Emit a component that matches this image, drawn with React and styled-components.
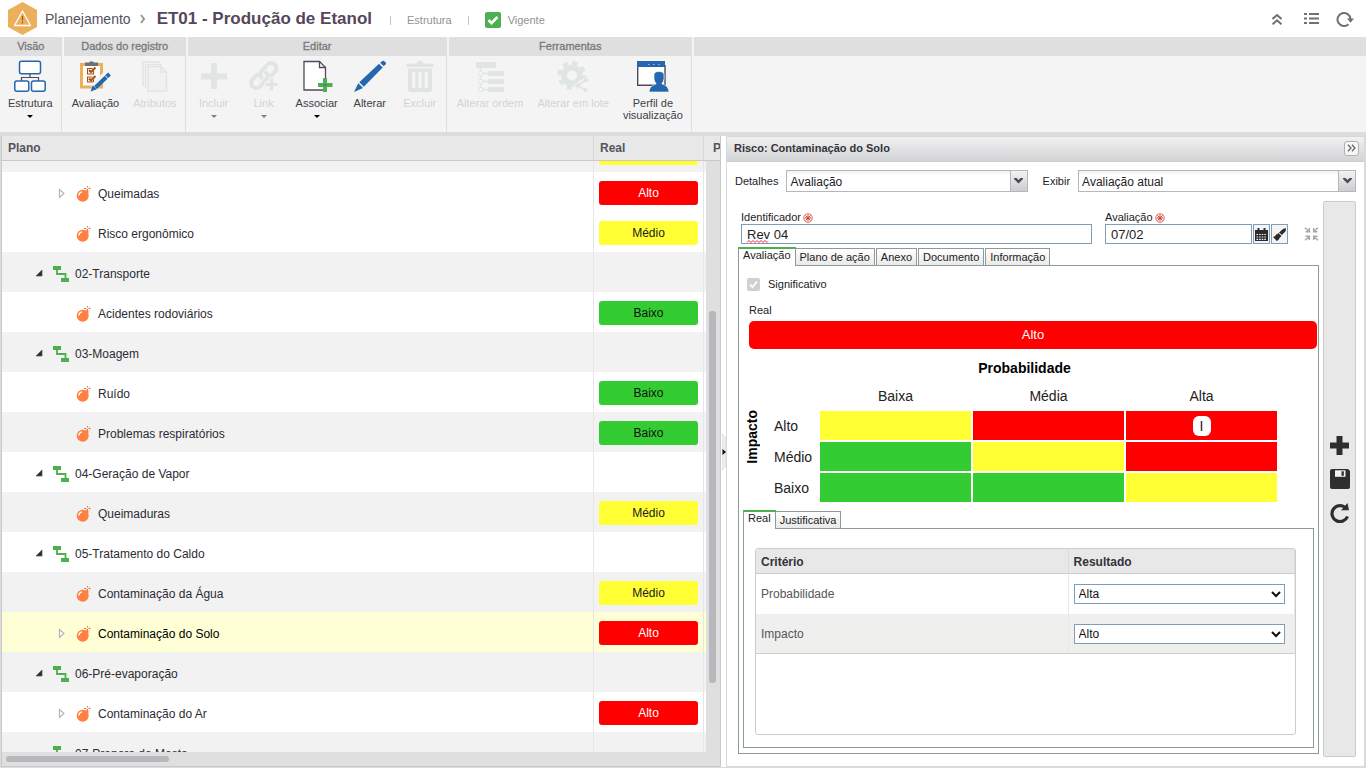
import React, { useEffect, useRef } from 'react';
import styled, { createGlobalStyle, css } from 'styled-components';

const sans = '"Liberation Sans", Arial, sans-serif';

const LEVELS = {
  Alto: { background: '#ff0000', color: '#ffffff' },
  Médio: { background: '#ffff33', color: '#222222' },
  Baixo: { background: '#33cc33', color: '#111111' },
};

const GlobalStyle = createGlobalStyle`
  *, *::before, *::after {
    box-sizing: border-box;
  }
  html, body, #root {
    height: 100%;
    margin: 0;
  }
  body {
    overflow: hidden;
    font-family: ${sans};
    font-size: 12px;
    color: #222;
    background: #dcdcdc;
  }
  button, input, select {
    font-family: inherit;
    margin: 0;
  }
  svg {
    display: block;
    flex: none;
  }
`;

const Page = styled.div`
  display: flex;
  flex-direction: column;
  height: 100%;
`;

/* top bar */

const TopBar = styled.header`
  display: flex;
  align-items: center;
  flex: none;
  height: 37px;
  padding: 0 12px 0 8px;
  background: #fff;
  color: #8c9494;
  font-size: 11px;
`;
const Crumb = styled.a`
  margin: 0 9px 0 8px;
  color: #54505c;
  font-size: 14px;
  text-decoration: none;
`;
const PageTitle = styled.h1`
  margin: 0 18px 0 11px;
  color: #54475c;
  font-size: 17px;
  line-height: 20px;
`;
const Bar = styled.span`
  width: 1px;
  height: 9px;
  margin-top: 4px;
  background: #c4c4c4;
`;
const TopText = styled.span`
  margin: 3px 16px 0;
`;
const Status = styled.span`
  display: flex;
  align-items: center;
  gap: 7px;
  margin: 3px 0 0 16px;
`;
const TopActions = styled.div`
  display: grid;
  grid-template-columns: repeat(3, 18px);
  align-items: center;
  gap: 16px;
  margin-left: auto;
`;
const IconButton = styled.button`
  display: flex;
  align-items: center;
  justify-content: center;
  padding: 0;
  border: 0;
  background: none;
`;

/* ribbon */

const Ribbon = styled.nav`
  display: flex;
  gap: 2px;
  flex: none;
  height: 95px;
  background: #f4f4f4;
`;
const Group = styled.section`
  display: flex;
  flex-direction: column;
  flex: ${({ $grow }) => ($grow ? '1' : 'none')};
`;
const GroupTitle = styled.h2`
  height: 19px;
  margin: 0;
  background: #dfdfdf;
  color: #77797c;
  font-size: 11px;
  font-weight: 400;
  line-height: 18px;
  text-align: center;
  -webkit-text-stroke: 0.3px #77797c;
`;
const GroupBody = styled.div`
  display: flex;
  flex: 1;
  padding: 4px 1px 0;
  border-right: ${({ $last }) => ($last ? '0' : '1px solid #dedede')};
`;
const Tool = styled.button`
  display: flex;
  flex-direction: column;
  align-items: center;
  min-width: 50px;
  padding: 0 7px;
  border: 0;
  background: none;
  color: ${({ disabled }) => (disabled ? '#d2d4d6' : '#3e4046')};
  font-size: 11px;
  line-height: 12px;
`;
const ToolLabel = styled.span`
  margin-top: 5px;
  text-align: center;
  white-space: pre-line;
`;
const Caret = styled.span`
  margin-top: 6px;
  border: 3px solid transparent;
  border-top-color: ${({ $dim }) => ($dim ? '#808080' : '#000')};
  border-bottom: 0;
`;

/* workspace */

const Workspace = styled.main`
  display: grid;
  grid-template-columns: minmax(0, 720fr) 5px minmax(0, 639fr);
  flex: 1;
  min-height: 0;
  padding: 4px 1px 1px;
`;
const TreePanel = styled.section`
  display: flex;
  flex-direction: column;
  min-height: 0;
  overflow: hidden;
  border: 1px solid #c9c9c9;
  border-top: 0;
  background: #dfdfdf;
`;
const Clip = styled.div`
  overflow: hidden;
  flex: none;
  border-bottom: 1px solid #c9c9c9;
`;
const TreeTable = styled.table`
  width: calc(100% + ${({ $overflow }) => $overflow}px);
  border-collapse: separate;
  border-spacing: 0;
  table-layout: fixed;
`;
const TreeHead = styled.th`
  height: 24px;
  padding: 0 6px;
  border-right: 1px solid #d8d8d8;
  background: #e8e8e8;
  color: #54545c;
  font-size: 12px;
  text-align: left;

  &:last-child {
    padding-left: 9px;
  }
`;
const TreeBody = styled.div`
  display: flex;
  flex: 1;
  min-height: 0;
`;
const Viewport = styled.div`
  flex: 1;
  min-width: 0;
  overflow: hidden;
`;
const TreeRow = styled.tr`
  height: 40px;
  background: ${({ $tone }) => ({ alt: '#f2f2f2', active: '#feffd5' }[$tone] || '#fff')};
  color: ${({ $tone }) => ($tone === 'active' ? '#000' : '#2b2b33')};
`;
const TreeCell = styled.td`
  padding: 2px 5px 0;
  border-right: 1px solid #e6e6e6;
  vertical-align: middle;
`;
const NodeLine = styled.div`
  display: grid;
  grid-template-columns: 13px 16px 1fr;
  align-items: center;
  gap: 6px;
  padding: 2px 0 0 ${({ $depth }) => 27 + $depth * 23}px;
  white-space: nowrap;
`;
const Pill = styled.div`
  height: 24px;
  border-radius: 3px;
  background: ${({ $level }) => LEVELS[$level].background};
  color: ${({ $level }) => LEVELS[$level].color};
  line-height: 24px;
  text-align: center;
`;
const VerticalTrack = styled.div`
  display: grid;
  grid-template-rows: 150fr 372fr 69fr;
  flex: none;
  width: 14px;
  padding: 0 4px 0 3px;
`;
const HorizontalTrack = styled.div`
  display: grid;
  grid-template-columns: 23fr 77fr;
  flex: none;
  height: 14px;
  padding: 4px;
`;
const Thumb = styled.div`
  ${({ $vertical }) => $vertical && 'grid-row: 2;'}
  height: ${({ $vertical }) => ($vertical ? 'auto' : '6px')};
  border-radius: 3px;
  background: #b8b8bc;
`;
const Splitter = styled.div`
  display: flex;
  align-items: center;
  justify-content: flex-end;
  background: #fff;
`;

/* detail panel */

const Detail = styled.section`
  display: flex;
  flex-direction: column;
  min-height: 0;
  border: 1px solid #d8d8d8;
  background: #fff;
`;
const DetailHead = styled.div`
  display: flex;
  align-items: center;
  justify-content: space-between;
  flex: none;
  height: 25px;
  padding: 0 5px 2px 7px;
  border-bottom: 1px solid #ccc;
  background: linear-gradient(#f1f1f1, #d3d4d6);
`;
const DetailTitle = styled.h2`
  margin: 0;
  color: #33333b;
  font-size: 11px;
`;
const Collapse = styled(IconButton)`
  width: 15px;
  height: 15px;
  border: 1px solid #b0b0b0;
  border-radius: 3px;
  background: #f6f6f6;
`;
const Filters = styled.div`
  display: flex;
  align-items: center;
  flex: none;
  padding: 8px 8px 0;
  font-size: 11px;
`;
const FilterLabel = styled.label`
  margin-right: 8px;
`;
const SelectShell = styled.div`
  display: flex;
  position: relative;
  flex: ${({ $grow }) => $grow} 1 0;
  height: 22px;
  margin-right: ${({ $gap }) => $gap || 0}px;
  border: 1px solid #b5b8bb;
`;
const FlatSelect = styled.select`
  appearance: none;
  width: 100%;
  padding: 1px 18px 0 3px;
  border: 0;
  background: linear-gradient(#f0f0f0, #fff 4px);
  color: #222;
  font-size: 12px;
`;
const SelectArrow = styled.span`
  display: flex;
  position: absolute;
  top: 0;
  right: 0;
  bottom: 0;
  align-items: center;
  justify-content: center;
  width: 17px;
  border-left: 1px solid #b5b8bb;
  background: linear-gradient(#f4f4f4, #ccc);
  pointer-events: none;
`;
const DetailBody = styled.div`
  display: flex;
  flex: 1;
  gap: 4px;
  min-height: 0;
  padding: 9px 8px 9px 11px;
`;
const Form = styled.form`
  display: flex;
  flex-direction: column;
  flex: 1;
  min-width: 0;
  padding-bottom: 3px;
`;
const SideBar = styled.aside`
  display: flex;
  flex-direction: column;
  align-items: center;
  justify-content: center;
  gap: 14px;
  flex: none;
  width: 33px;
  border: 1px solid #ccc;
  border-radius: 2px;
  background: #e8e8e8;
`;
const Fields = styled.div`
  display: flex;
  align-items: flex-end;
  flex: none;
  height: 43px;
  padding-left: 3px;
`;
const Field = styled.div`
  display: flex;
  flex-direction: column;
  position: relative;
  flex: ${({ $fixed }) => ($fixed ? `0 0 ${$fixed}px` : '1')};
  min-width: 0;
  margin-right: ${({ $gap }) => $gap || 0}px;
`;
const FieldLabel = styled.label`
  display: flex;
  align-items: center;
  gap: 2px;
  font-size: 11px;
  line-height: 13px;
`;
const FieldLine = styled.div`
  display: flex;
  gap: 1px;
`;
const TextInput = styled.input`
  flex: 1;
  min-width: 0;
  height: 20px;
  padding: 0 5px;
  border: 1px solid #7f9db9;
  border-radius: 0;
  background: #fff;
  color: #222;
  font-size: 13px;
`;
const Squiggle = styled.svg`
  position: absolute;
  left: 6px;
  bottom: 1px;
`;
const FieldButton = styled(IconButton)`
  width: 17px;
  height: 20px;
  border: 1px solid #7f9db9;
  background: #f4f4f4;
`;
const Shrink = styled(IconButton)`
  height: 20px;
  margin-left: 16px;
`;

const Tabs = styled.div`
  display: flex;
  align-items: flex-start;
  gap: 1px;
  flex: none;
  height: 18px;
  margin-top: ${({ $gap }) => $gap}px;
`;
const Tab = styled.button`
  flex: none;
  height: 18px;
  margin-top: 1px;
  padding: 0 4px;
  border: 1px solid #8e9c98;
  background: linear-gradient(#fff, #e9e9e9);
  color: #222;
  font-size: 11px;
  line-height: 15px;
  ${({ $active }) => $active && css`
    position: relative;
    z-index: 1;
    height: 19px;
    margin: 0 -2px 0 0;
    padding-bottom: 5px;
    border-top: 2px solid #4caf50;
    border-bottom: 0;
    background: #fff;
    line-height: 11px;
  `}
`;
const TabPanel = styled.div`
  display: flex;
  flex-direction: column;
  flex: 1;
  min-height: 0;
  margin-right: ${({ $inset }) => $inset || 0}px;
  border: 1px solid #8e9c98;
  padding: ${({ $pad }) => $pad};
`;
const CheckLine = styled.div`
  display: flex;
  align-items: center;
  gap: 8px;
  height: 14px;
  padding-left: 4px;
  font-size: 11px;
`;
const Check = styled.input`
  appearance: none;
  width: 13px;
  height: 13px;
  border-radius: 2px;
  background: #d0d0d0;
`;
const CheckMark = styled.span`
  display: grid;
  position: relative;
`;
const CheckGlyph = styled.svg`
  position: absolute;
  top: 2px;
  left: 2px;
  pointer-events: none;
`;
const Caption = styled.div`
  margin: 12px 6px 4px;
  font-size: 11px;
  line-height: 14px;
`;
const Result = styled.div`
  flex: none;
  height: 28px;
  margin: 0 1px 0 6px;
  border-radius: 5px;
  background: #ff0000;
  color: #fff;
  font-size: 13px;
  line-height: 28px;
  text-align: center;
`;
const AxisTitle = styled.h3`
  margin: 0;
  font-size: 14px;
  line-height: 16px;
  text-align: center;
  color: #000;
  ${({ $vertical }) => $vertical && css`
    writing-mode: vertical-rl;
    rotate: 180deg;
    line-height: 18px;
  `}
`;
const MatrixBlock = styled.div`
  display: grid;
  grid-template-columns: 18px 1fr;
  align-items: end;
  margin: 11px 39px 0 0;
`;
const AxisTop = styled(AxisTitle)`
  grid-column: 1 / -1;
  margin: 0 -22px 9px 5px;
`;
const AxisSlot = styled.div`
  display: flex;
  align-items: center;
  height: 59px;
  margin-bottom: 38px;
`;
const Matrix = styled.table`
  width: 100%;
  padding: 0 0 0 11px;
  border-spacing: 2px;
  border-collapse: separate;
  table-layout: fixed;
  font-size: 14px;
`;
const MatrixHead = styled.th`
  height: 22px;
  padding: 0 0 4px;
  font-weight: 400;
`;
const MatrixRowHead = styled.th`
  width: 44px;
  padding: 0;
  font-weight: 400;
  text-align: left;
`;
const MatrixCell = styled.td`
  height: 29px;
  padding: 0;
  background: ${({ $level }) => LEVELS[$level].background};
`;
const Marker = styled.span`
  display: block;
  width: 18px;
  height: 20px;
  margin: 0 auto;
  border-radius: 6px;
  background: #fff;
  color: #222;
  line-height: 20px;
  text-align: center;
`;

const CriteriaBox = styled.div`
  flex: 1;
  border: 1px solid #ccc;
  border-radius: 3px;
  overflow: hidden;
`;
const Criteria = styled.table`
  width: 100%;
  border-spacing: 0;
  border-collapse: separate;
  table-layout: fixed;
  color: #55555c;
`;
const CriteriaHead = styled.th`
  width: ${({ $width }) => $width || 'auto'};
  height: 25px;
  padding: 2px 5px 0;
  border-right: 1px solid #dcdcdc;
  border-bottom: 1px solid #ccc;
  background: #e8e8e8;
  color: #33333b;
  text-align: left;
`;
const CriteriaCell = styled.td`
  height: 40px;
  padding: 0 9px 0 5px;
  border-right: 1px solid #e8e8e8;
  background: ${({ $alt }) => ($alt ? '#efefed' : '#fff')};
  ${({ $alt }) => $alt && 'border-bottom: 1px solid #ccc;'}
`;
const NativeSelect = styled.select`
  display: block;
  width: 100%;
  height: 20px;
  border: 1px solid #7f9db9;
  border-radius: 0;
  background: #fff;
  color: #111;
  font-size: 12px;
`;

/* icons */

const HexLogo = () => (
  <svg width="29" height="33" viewBox="0 0 29 33">
    <path d="M14.500 0 29 8v17l-14.500 8L0 25V8z" fill="#ecb05c" />
    <path d="M14.500 9 22.500 23.500h-16z" fill="none" stroke="#fff" strokeWidth="1.300" strokeLinejoin="round" />
    <path d="M14.500 14v4.500M14.500 19.700v1.500" stroke="#a8500f" strokeWidth="1.200" />
  </svg>
);
const CrumbArrow = () => (
  <svg width="6" height="10" viewBox="0 0 6 10" fill="none" stroke="#8b9e9a" strokeWidth="2">
    <path d="M1 1l3 4-3 4" />
  </svg>
);
const GreenCheck = () => (
  <svg width="16" height="16" viewBox="0 0 16 16">
    <rect width="16" height="16" rx="2" fill="#4caf50" />
    <path d="M3.500 8l3 3.200 6-6.200" fill="none" stroke="#fff" strokeWidth="2.600" />
  </svg>
);
const DoubleUp = () => (
  <svg width="10" height="12" viewBox="0 0 10 12" fill="none" stroke="#6f6f77" strokeWidth="2">
    <path d="M.5 6 5 2l4.500 4M.5 11.300 5 7.300l4.500 4" />
  </svg>
);
const ListIcon = () => (
  <svg width="15" height="11" viewBox="0 0 15 11" fill="#6f6f77">
    <path d="M0 0h3v2H0zM5 0h10v2H5zM0 4.500h3v2H0zM5 4.500h10v2H5zM0 9h3v2H0zM5 9h10v2H5z" />
  </svg>
);
const Reload = () => (
  <svg width="18" height="16" viewBox="0 0 18 16">
    <path d="M12.500 13.200A6.500 6.500 0 1 1 14.500 8" fill="none" stroke="#6f6f77" strokeWidth="2" />
    <path d="M11 7.500h7l-3.500 4.300z" fill="#6f6f77" />
  </svg>
);

const StructureIcon = () => (
  <svg width="32" height="32" viewBox="0 0 32 32" fill="#fff" stroke="#2567ae" strokeWidth="1.500">
    <path d="M16 13v4M7.500 21v-3.500h17V21" fill="none" stroke="#54475c" strokeWidth="1.200" />
    <rect x="5.500" y="1.200" width="21" height="12.500" rx="2" />
    <rect x=".8" y="21" width="14" height="10.200" rx="2" />
    <rect x="17.500" y="21" width="13.700" height="10.200" rx="2" />
  </svg>
);
const ClipboardIcon = () => (
  <svg width="32" height="32" viewBox="0 0 32 32">
    <rect x="2.500" y="4.500" width="20" height="22.500" fill="#fff" stroke="#ecb05c" strokeWidth="3" />
    <path d="M6 2.500h4a3 3 0 0 1 5 0h4v3.500H6z" fill="#6f6f77" />
    <g fill="none" stroke="#a8500f" strokeWidth="1.100">
      <path d="M14.500 11v3H8.500V8.500h5M14.500 19.500v2.500H8.500v-5h5" />
      <path d="M10 10l2 2 4.500-4.500M10 18.500l2 2 4.500-4.500" strokeWidth="2" />
    </g>
    <path d="M26 15l-12.500 12.500" stroke="#f4f4f4" strokeWidth="6" />
    <path d="M30.500 14l-14 13.500" stroke="#2567ae" strokeWidth="4" />
    <path d="M11.500 31.500l2.300-6.200 4 4z" fill="#2567ae" />
    <path d="M26 15.500l3.500 3.500" stroke="#fff" />
  </svg>
);
const PagesIcon = () => (
  <svg width="32" height="32" viewBox="0 0 32 32" fill="#f1f1f1" stroke="#e2e4e5" strokeWidth="1.500">
    <path d="M4 26V2h17M6.500 28V4.500H23" fill="none" />
    <path d="M9 6.500h13l5.500 5.500v19H9z" />
    <path d="M22 6.500V12h5.500" fill="none" />
  </svg>
);
const PlusIcon = () => (
  <svg width="32" height="32" viewBox="0 0 32 32" fill="#e1e4e5">
    <path d="M13 3h6v10.500h10v6H19V29h-6v-9.500H3v-6h10z" />
  </svg>
);
const LinkIcon = () => (
  <svg width="32" height="32" viewBox="0 0 32 32">
    <g fill="none" stroke="#e1e4e5" strokeWidth="4" strokeLinecap="round">
      <path d="M13.500 17.500a5 5 0 0 1 0-6.500l6-6.500a5 5 0 0 1 7.300 0 5 5 0 0 1 0 7.300L23 16" />
      <path d="M18 12.500a5 5 0 0 1 0 7l-6 7a5 5 0 0 1-7.300 0 5 5 0 0 1 0-7.300L9 15" />
    </g>
    <path d="M21.500 18h4v4.500H30v4h-4.500V31h-4v-4.500H17v-4h4.500z" fill="#e1e4e5" stroke="#f4f4f4" />
  </svg>
);
const AssociateIcon = () => (
  <svg width="32" height="32" viewBox="0 0 32 32">
    <path d="M3 1.500h15.500l6 6v22.500H3z" fill="#fff" stroke="#54475c" strokeWidth="1.300" />
    <path d="M18.500 1.500v6h6" fill="none" stroke="#54475c" strokeWidth="1.300" />
    <path d="M22 18h4v5h5.500v4H26v5h-4v-5h-5v-4h5z" fill="#4caf50" />
    <path d="M22.500 25h3" stroke="#2567ae" />
  </svg>
);
const PencilIcon = () => (
  <svg width="32" height="32" viewBox="0 0 32 32" fill="#2567ae">
    <path d="M28.500 1q1.500-.8 2.300.7 2 1.300.7 2.800l-1.800 1.800-3.500-3.500zM25 3.700l3.700 3.700L9.800 26.800 5.300 22.300zM4.300 23.300l4.700 4.700L0 32z" />
  </svg>
);
const TrashIcon = () => (
  <svg width="32" height="32" viewBox="0 0 32 32" fill="#e1e4e5">
    <path d="M2.500 3.500h10q1-3 3.500-3t3.500 3h10V7h-27z" />
    <path fillRule="evenodd" d="M4 8.500h24V29q0 3-3 3H7q-3 0-3-3zM8 12v16h3.500V12zm6.300 0v16h3.500V12zm6.300 0v16h3.400V12z" />
  </svg>
);
const OrderIcon = () => (
  <svg width="32" height="32" viewBox="0 0 32 32" fill="#e1e4e5">
    <path d="M2 2h20v6H2zM14 11h16v5H14zM14 19h16v5H14zM14 27h16v5H14z" />
    <path d="M6.500 8v22M6.500 13.500H14M6.500 21.500H14M6.500 29.500H14" stroke="#e1e4e5" strokeWidth="1.500" />
    <path d="M4.700 11.700h3.800v3.600H4.700zM4.700 19.700h3.800v3.600H4.700zM4.700 27.700h3.800v3.600H4.700z" fill="#f8f8f8" stroke="#e1e4e5" />
  </svg>
);
const GearIcon = () => (
  <svg width="32" height="32" viewBox="0 0 32 32">
    <circle cx="15" cy="15.500" r="8" fill="none" stroke="#e1e4e5" strokeWidth="6" />
    <circle cx="15" cy="15.500" r="12" fill="none" stroke="#e1e4e5" strokeWidth="5" strokeDasharray="5 4.425" />
    <path d="M31 19l-9 6 8 5.500" fill="none" stroke="#f4f4f4" strokeWidth="6" />
    <path d="M29 20l-8 5.500 7 4.500" fill="none" stroke="#e1e4e5" strokeWidth="2" />
    <g fill="#e1e4e5">
      <circle cx="29" cy="20" r="2.200" />
      <circle cx="20.500" cy="25.500" r="2.200" />
      <circle cx="28.500" cy="30" r="2" />
    </g>
  </svg>
);
const ProfileIcon = () => (
  <svg width="32" height="32" viewBox="0 0 32 32">
    <path d="M.7 5v20.300H28V5" fill="#fff" stroke="#54475c" strokeWidth="1.400" />
    <path d="M0 1h28v6H0z" fill="#2567ae" />
    <path d="M11 4.500h1.500M16 4.500h1.500M21 4.500h1.500" stroke="#9cbfe4" />
    <path
      d="M17 15q0-3.500 5-3.500t5 3.500v4q-.5 3-2 4v1q6.500 1.500 7 8H12q.5-6.500 7-8v-1q-1.500-1-2-4z"
      fill="#2567ae"
      stroke="#fff"
      strokeWidth=".6"
    />
  </svg>
);

const BombIcon = () => (
  <svg width="16" height="16" viewBox="0 0 16 16">
    <circle cx="6.700" cy="9.700" r="6" fill="#ff8040" />
    <path d="M8.500 5.500l2-2 2.500 2.500-2 2z" fill="#ff8040" />
    <path d="M2.800 9.500Q3 6.500 6 5.900" fill="none" stroke="#fff" strokeWidth="1.300" />
    <path d="M8 2.500h2.500M12.500 2.500h2M11.500 0v1.500M11.500 3v2M13.500.8l-.5.500M13.500 4.500l.5.500" stroke="#e07038" strokeWidth=".9" />
  </svg>
);
const ProcessIcon = () => (
  <svg width="16" height="16" viewBox="0 0 16 16">
    <path d="M0 0h8v4H0zM8 12h8v4H8z" fill="#4caf50" />
    <path d="M4 3v5h8.500v5" fill="none" stroke="#4caf50" strokeWidth="1.800" />
  </svg>
);
const Expander = ({ state }) => (
  <svg width="13" height="12" viewBox="0 0 13 12">
    {state === 'open' && <path d="M8 2v6H2z" fill="#2e2e36" stroke="#55555c" strokeWidth=".7" />}
    {state === 'closed' && <path d="M2.500 1.500v8l4.500-4z" fill="#fff" stroke="#b4b4b4" strokeWidth="1.200" />}
  </svg>
);
const DoubleRight = () => (
  <svg width="9" height="8" viewBox="0 0 9 8" fill="none" stroke="#66666c" strokeWidth="1.300">
    <path d="M1 .8 4 4 1 7.200M5 .8 8 4 5 7.200" />
  </svg>
);
const DownMark = () => (
  <svg width="9" height="6" viewBox="0 0 9 6" fill="#54475c">
    <path d="M0 0h2.500l2 2 2-2H9v1L4.500 5.500 0 1z" />
  </svg>
);
const Required = () => (
  <svg width="10" height="10" viewBox="0 0 10 10" fill="none" stroke="#cf3a2c">
    <circle cx="5" cy="5" r="4.300" stroke="#d6604c" strokeWidth=".9" />
    <path d="M5 1.500v7M1.500 5h7M2.600 2.600l4.800 4.800M7.400 2.600 2.600 7.400" />
  </svg>
);
const CalendarIcon = () => (
  <svg width="13" height="13" viewBox="0 0 13 13">
    <path d="M0 2h13v11H0zM2.500 0h2v3h-2zM8.500 0h2v3h-2z" fill="#2b2b2e" />
    <path d="M1.500 6.500h10M1.500 9h10M1.500 11.400h10" stroke="#f4f4f4" strokeWidth="1.200" strokeDasharray="1.600 1" />
  </svg>
);
const BrushIcon = () => (
  <svg width="13" height="13" viewBox="0 0 13 13" fill="#2b2b2e">
    <path d="M12.800 0v3L9 7 6 4.500 10 1zM5.500 5l3 3-1.500 1.500-3-3zM3.500 6l3.500 3.500q-1 2.500-3.500 3.500L2 11 0 9Q2.500 8.500 3.500 6z" />
  </svg>
);
const ShrinkIcon = () => (
  <svg width="15" height="14" viewBox="0 0 15 14" fill="none" stroke="#a4a9a8" strokeWidth="1.500">
    <path d="M1 .8l4 3.500M1.500 4.800h3.800V1M14 .8l-4 3.500M13.500 4.800H9.700V1M1 13.200l4-3.500M1.500 9.200h3.800V13M14 13.200l-4-3.500M13.500 9.200H9.700V13" />
  </svg>
);
const AddIcon = () => (
  <svg width="19" height="19" viewBox="0 0 19 19" fill="#2e2e30">
    <path d="M6.500 0h6v6.500H19v6h-6.500V19h-6v-6.500H0v-6h6.500z" />
  </svg>
);
const SaveIcon = () => (
  <svg width="20" height="20" viewBox="0 0 20 20">
    <path d="M2 0h16l2 2v16q0 2-2 2H2q-2 0-2-2V2q0-2 2-2z" fill="#2e2e30" />
    <path d="M5 1.300h10.500v6.500H5z" fill="#f2f2f2" />
    <path d="M11.500 2.300h2.300v4.500h-2.300z" fill="#2e2e30" />
  </svg>
);
const RedoIcon = () => (
  <svg width="20" height="20" viewBox="0 0 20 20">
    <path d="M14.800 4.200A8 8 0 1 0 17.500 13.500" fill="none" stroke="#2e2e30" strokeWidth="3.200" />
    <path d="M17.500 0 19 7.300h-8z" fill="#2e2e30" />
  </svg>
);
const SplitHandle = () => (
  <svg width="4" height="36" viewBox="0 0 4 36">
    <path d="M0 0l4 4v28l-4 4z" fill="#efefef" stroke="#ccc" strokeWidth=".6" />
    <path d="M.5 15v6l3.500-3z" fill="#111" />
  </svg>
);

const RIBBON = [
  { title: 'Visão', tools: [{ label: 'Estrutura', icon: StructureIcon, menu: true }] },
  {
    title: 'Dados do registro',
    tools: [
      { label: 'Avaliação', icon: ClipboardIcon },
      { label: 'Atributos', icon: PagesIcon, disabled: true },
    ],
  },
  {
    title: 'Editar',
    tools: [
      { label: 'Incluir', icon: PlusIcon, disabled: true, menu: true },
      { label: 'Link', icon: LinkIcon, disabled: true, menu: true },
      { label: 'Associar', icon: AssociateIcon, menu: true },
      { label: 'Alterar', icon: PencilIcon },
      { label: 'Excluir', icon: TrashIcon, disabled: true },
    ],
  },
  {
    title: 'Ferramentas',
    tools: [
      { label: 'Alterar ordem', icon: OrderIcon, disabled: true },
      { label: 'Alterar em lote', icon: GearIcon, disabled: true },
      { label: 'Perfil de\nvisualização', icon: ProfileIcon },
    ],
  },
];

const ROWS = [
  { level: 'Médio', tone: 'alt', depth: 1 },
  { name: 'Queimadas', level: 'Alto', depth: 1, state: 'closed' },
  { name: 'Risco ergonômico', level: 'Médio', depth: 1 },
  { name: '02-Transporte', tone: 'alt', depth: 0, state: 'open' },
  { name: 'Acidentes rodoviários', level: 'Baixo', depth: 1 },
  { name: '03-Moagem', tone: 'alt', depth: 0, state: 'open' },
  { name: 'Ruído', level: 'Baixo', depth: 1 },
  { name: 'Problemas respiratórios', level: 'Baixo', tone: 'alt', depth: 1 },
  { name: '04-Geração de Vapor', depth: 0, state: 'open' },
  { name: 'Queimaduras', level: 'Médio', tone: 'alt', depth: 1 },
  { name: '05-Tratamento do Caldo', depth: 0, state: 'open' },
  { name: 'Contaminação da Água', level: 'Médio', tone: 'alt', depth: 1 },
  { name: 'Contaminação do Solo', level: 'Alto', tone: 'active', depth: 1, state: 'closed' },
  { name: '06-Pré-evaporação', tone: 'alt', depth: 0, state: 'open' },
  { name: 'Contaminação do Ar', level: 'Alto', depth: 1, state: 'closed' },
  { name: '07-Preparo do Mosto', tone: 'alt', depth: 0 },
];

const MATRIX = [
  { impact: 'Alto', cells: ['Médio', 'Alto', 'Alto'], marked: 2 },
  { impact: 'Médio', cells: ['Baixo', 'Médio', 'Alto'] },
  { impact: 'Baixo', cells: ['Baixo', 'Baixo', 'Médio'] },
];

const TreeColumns = () => (
  <colgroup>
    <col />
    <col width="110" />
    <col width="40" />
  </colgroup>
);

const TreeGrid = () => {
  const viewport = useRef(null);

  useEffect(() => {
    viewport.current.scrollTop = 29;
  }, []);

  return (
    <TreePanel>
      <Clip>
        <TreeTable $overflow={24}>
          <TreeColumns />
          <thead>
            <tr>
              <TreeHead>Plano</TreeHead>
              <TreeHead>Real</TreeHead>
              <TreeHead>P</TreeHead>
            </tr>
          </thead>
        </TreeTable>
      </Clip>
      <TreeBody>
        <Viewport ref={viewport}>
          <TreeTable $overflow={38}>
            <TreeColumns />
            <tbody>
              {ROWS.map((row, i) => (
                <TreeRow key={row.name || i} $tone={row.tone}>
                  <TreeCell>
                    {row.name && (
                      <NodeLine $depth={row.depth}>
                        <Expander state={row.state} />
                        {row.depth === 0 ? <ProcessIcon /> : <BombIcon />}
                        {row.name}
                      </NodeLine>
                    )}
                  </TreeCell>
                  <TreeCell>{row.level && <Pill $level={row.level}>{row.level}</Pill>}</TreeCell>
                  <TreeCell />
                </TreeRow>
              ))}
            </tbody>
          </TreeTable>
        </Viewport>
        <VerticalTrack>
          <Thumb $vertical />
        </VerticalTrack>
      </TreeBody>
      <HorizontalTrack>
        <Thumb />
      </HorizontalTrack>
    </TreePanel>
  );
};

const DropDown = ({ id, value, grow, gap }) => (
  <SelectShell $grow={grow} $gap={gap}>
    <FlatSelect id={id} defaultValue={value}>
      <option>{value}</option>
    </FlatSelect>
    <SelectArrow>
      <DownMark />
    </SelectArrow>
  </SelectShell>
);

const RiskMatrix = () => (
  <MatrixBlock>
    <AxisTop>Probabilidade</AxisTop>
    <AxisSlot>
      <AxisTitle $vertical>Impacto</AxisTitle>
    </AxisSlot>
    <Matrix>
      <thead>
        <tr>
          <MatrixRowHead as="td" />
          <MatrixHead>Baixa</MatrixHead>
          <MatrixHead>Média</MatrixHead>
          <MatrixHead>Alta</MatrixHead>
        </tr>
      </thead>
      <tbody>
        {MATRIX.map(({ impact, cells, marked }) => (
          <tr key={impact}>
            <MatrixRowHead>{impact}</MatrixRowHead>
            {cells.map((level, i) => (
              <MatrixCell key={i} $level={level}>
                {marked === i && <Marker>I</Marker>}
              </MatrixCell>
            ))}
          </tr>
        ))}
      </tbody>
    </Matrix>
  </MatrixBlock>
);

const CriteriaTable = () => (
  <CriteriaBox>
    <Criteria>
      <thead>
        <tr>
          <CriteriaHead $width="58%">Critério</CriteriaHead>
          <CriteriaHead>Resultado</CriteriaHead>
        </tr>
      </thead>
      <tbody>
        {[['Probabilidade', 'Alta'], ['Impacto', 'Alto']].map(([name, value], i) => (
          <tr key={name}>
            <CriteriaCell $alt={i === 1}>
              <label htmlFor={name}>{name}</label>
            </CriteriaCell>
            <CriteriaCell $alt={i === 1}>
              <NativeSelect id={name} defaultValue={value}>
                <option>{value}</option>
              </NativeSelect>
            </CriteriaCell>
          </tr>
        ))}
      </tbody>
    </Criteria>
  </CriteriaBox>
);

const RiskForm = () => (
  <Form>
    <Fields>
      <Field $gap={13}>
        <FieldLabel htmlFor="identificador">
          Identificador
          <Required />
        </FieldLabel>
        <FieldLine>
          <TextInput id="identificador" defaultValue="Rev 04" />
        </FieldLine>
        <Squiggle width="23" height="3" viewBox="0 0 23 3" fill="none" stroke="#ff2030">
          <path d="M0 2.500l2-2 2 2 2-2 2 2 2-2 2 2 2-2 2 2 2-2 2 2 1-1" />
        </Squiggle>
      </Field>
      <Field $fixed={183}>
        <FieldLabel htmlFor="data">
          Avaliação
          <Required />
        </FieldLabel>
        <FieldLine>
          <TextInput id="data" defaultValue="07/02" />
          <FieldButton type="button" aria-label="Calendário">
            <CalendarIcon />
          </FieldButton>
          <FieldButton type="button" aria-label="Limpar">
            <BrushIcon />
          </FieldButton>
        </FieldLine>
      </Field>
      <Shrink type="button" aria-label="Reduzir">
        <ShrinkIcon />
      </Shrink>
    </Fields>

    <Tabs $gap={3}>
      <Tab type="button" $active>Avaliação</Tab>
      <Tab type="button">Plano de ação</Tab>
      <Tab type="button">Anexo</Tab>
      <Tab type="button">Documento</Tab>
      <Tab type="button">Informação</Tab>
    </Tabs>
    <TabPanel $pad="11px 0 5px 4px">
      <CheckLine>
        <CheckMark>
          <Check id="significativo" type="checkbox" defaultChecked disabled />
          <CheckGlyph width="9" height="9" viewBox="0 0 9 9" fill="none" stroke="#fff" strokeWidth="1.800">
            <path d="M1 4.500l2.500 2.700L8 1.500" />
          </CheckGlyph>
        </CheckMark>
        <label htmlFor="significativo">Significativo</label>
      </CheckLine>
      <Caption>Real</Caption>
      <Result>Alto</Result>
      <RiskMatrix />
      <Tabs $gap={6}>
        <Tab type="button" $active>Real</Tab>
        <Tab type="button">Justificativa</Tab>
      </Tabs>
      <TabPanel $pad="19px 17px 12px 11px" $inset={4}>
        <CriteriaTable />
      </TabPanel>
    </TabPanel>
  </Form>
);

const App = () => (
  <>
    <GlobalStyle />
    <Page>
      <TopBar>
        <HexLogo />
        <Crumb href="#planejamento">Planejamento</Crumb>
        <CrumbArrow />
        <PageTitle>ET01 - Produção de Etanol</PageTitle>
        <Bar />
        <TopText>Estrutura</TopText>
        <Bar />
        <Status>
          <GreenCheck />
          Vigente
        </Status>
        <TopActions>
          <IconButton aria-label="Recolher"><DoubleUp /></IconButton>
          <IconButton aria-label="Lista"><ListIcon /></IconButton>
          <IconButton aria-label="Atualizar"><Reload /></IconButton>
        </TopActions>
      </TopBar>

      <Ribbon>
        {RIBBON.map(({ title, tools }) => (
          <Group key={title}>
            <GroupTitle>{title}</GroupTitle>
            <GroupBody>
              {tools.map(({ label, icon: Icon, disabled, menu }) => (
                <Tool key={label} disabled={disabled}>
                  <Icon />
                  <ToolLabel>{label}</ToolLabel>
                  {menu && <Caret $dim={disabled} />}
                </Tool>
              ))}
            </GroupBody>
          </Group>
        ))}
        <Group $grow>
          <GroupTitle />
          <GroupBody $last />
        </Group>
      </Ribbon>

      <Workspace>
        <TreeGrid />
        <Splitter>
          <SplitHandle />
        </Splitter>
        <Detail>
          <DetailHead>
            <DetailTitle>Risco: Contaminação do Solo</DetailTitle>
            <Collapse aria-label="Recolher painel"><DoubleRight /></Collapse>
          </DetailHead>
          <Filters>
            <FilterLabel htmlFor="detalhes">Detalhes</FilterLabel>
            <DropDown id="detalhes" value="Avaliação" grow={241} gap={15} />
            <FilterLabel htmlFor="exibir">Exibir</FilterLabel>
            <DropDown id="exibir" value="Avaliação atual" grow={278} />
          </Filters>
          <DetailBody>
            <RiskForm />
            <SideBar>
              <IconButton aria-label="Incluir"><AddIcon /></IconButton>
              <IconButton aria-label="Salvar"><SaveIcon /></IconButton>
              <IconButton aria-label="Recarregar"><RedoIcon /></IconButton>
            </SideBar>
          </DetailBody>
        </Detail>
      </Workspace>
    </Page>
  </>
);

export default App;
